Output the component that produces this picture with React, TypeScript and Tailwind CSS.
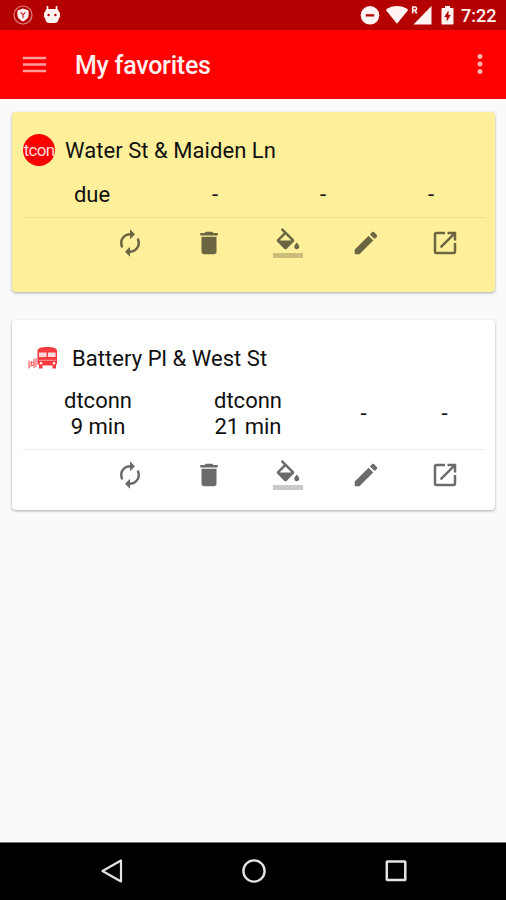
import { ReactNode } from "react";

type Cell = { route?: string; time: string };

const Icon = ({ d, size = "size-[30px]", children }: { d: string; size?: string; children?: ReactNode }) => (
  <svg viewBox="0 0 24 24" className={`${size} block shrink-0`} fill="currentColor">
    <path d={d} />
    {children}
  </svg>
);

const RENEW = "M12 6v3l4-4-4-4v3c-4.42 0-8 3.58-8 8 0 1.57.46 3.03 1.24 4.26L6.7 14.8c-.45-.83-.7-1.79-.7-2.8 0-3.31 2.69-6 6-6zm6.76 1.74L17.3 9.2c.44.84.7 1.79.7 2.8 0 3.31-2.69 6-6 6v-3l-4 4 4 4v-3c4.42 0 8-3.58 8-8 0-1.57-.46-3.03-1.24-4.26z";
const DELETE = "M6 19c0 1.1.9 2 2 2h8c1.1 0 2-.9 2-2V7H6v12zM19 4h-3.5l-1-1h-5l-1 1H5v2h14V4z";
const FILL = "M16.56 8.94L7.62 0 6.21 1.41l2.38 2.38-5.15 5.15c-.59.59-.59 1.54 0 2.12l5.5 5.5c.29.29.68.44 1.06.44s.77-.15 1.06-.44l5.5-5.5c.59-.58.59-1.53 0-2.12zM5.21 10L10 5.21 14.79 10H5.21zM19 11.5s-2 2.17-2 3.5c0 1.1.9 2 2 2s2-.9 2-2c0-1.33-2-3.5-2-3.5z";
const EDIT = "M3 17.25V21h3.75L17.81 9.94l-3.75-3.75L3 17.25zM20.71 7.04c.39-.39.39-1.02 0-1.41l-2.34-2.34c-.39-.39-1.02-.39-1.41 0l-1.83 1.83 3.75 3.75 1.83-1.83z";
const OPEN = "M19 19H5V5h7V3H5c-1.11 0-2 .9-2 2v14c0 1.1.89 2 2 2h14c1.1 0 2-.9 2-2v-7h-2v7zM14 3v2h3.59l-9.83 9.83 1.41 1.41L19 6.41V10h2V3h-7z";
const MENU = "M3 18h18v-2H3v2zm0-5h18v-2H3v2zm0-7v2h18V6H3z";
const MORE = "M12 8c1.1 0 2-.9 2-2s-.9-2-2-2-2 .9-2 2 .9 2 2 2zm0 2c-1.1 0-2 .9-2 2s.9 2 2 2 2-.9 2-2-.9-2-2-2zm0 6c-1.1 0-2 .9-2 2s.9 2 2 2 2-.9 2-2-.9-2-2-2z";

const StatusBar = () => (
  <div className="h-[30px] bg-[#b50000] flex items-center text-[#fff3f3] pl-[13px] pr-[9px]">
    <svg viewBox="0 0 20 20" className="size-5">
      <circle cx="10" cy="10" r="9" fill="none" stroke="#e08484" strokeWidth="1.2" />
      <path d="M10 3.6 15.6 5.4V10c0 3-2.6 5-5.6 6.6C7 15 4.4 13 4.4 10V5.4z" fill="currentColor" />
      <path d="M7.7 7.2 10 10.2l2.3-3M10 10.2v3" fill="none" stroke="#c63c3c" strokeWidth="1.3" />
    </svg>
    <svg viewBox="0 0 18 20" className="w-[18px] h-5 ml-[10px]" fill="currentColor">
      <path d="M4.5 1v4M13.5 1v4" stroke="currentColor" strokeWidth="1.6" />
      <path d="M4.500 4h9c1.500 0 2.200 1 2.200 2.500L17 8v4l-1.300 1.500c0 3-2 4.500-4.200 4.500h-5c-2.200 0-4.200-1.500-4.200-4.500L1 12V8l1.300-1.500C2.300 5 3 4 4.500 4z" />
      <circle cx="5.600" cy="10" r="1.200" fill="#b50000" />
      <circle cx="12.400" cy="10" r="1.200" fill="#b50000" />
    </svg>
    <svg viewBox="0 0 20 20" className="size-5 ml-auto">
      <circle cx="10" cy="10.300" r="9.300" fill="currentColor" />
      <rect x="5.800" y="9.200" width="8.400" height="2.300" fill="#b50000" />
    </svg>
    <svg viewBox="0 0 24 20" className="w-6 h-5 ml-[5px]" fill="currentColor">
      <path d="M12 18.800.800 5C6-.200 18-.200 23.200 5z" />
    </svg>
    <svg viewBox="0 0 21 20" className="w-[21px] h-5 ml-[2px]" fill="currentColor">
      <path d="M20.500 1v18.500H2.500z" />
      <path d="M1.700 8.500V2h2.200a1.500 1.500 0 0 1 0 3.300H1.700m2.200 0 1.800 3.200" fill="none" stroke="currentColor" strokeWidth="1.600" />
    </svg>
    <svg viewBox="0 0 13 20" className="w-[13px] h-5 ml-[9px]">
      <path d="M4 1h5v2h2.500c.6 0 1 .4 1 1v14.500c0 .6-.4 1-1 1h-10c-.6 0-1-.4-1-1V4c0-.6.4-1 1-1H4z" fill="currentColor" />
      <path d="M7.500 5.500 3.200 12h2.500v4.500L9.800 10H7.500z" fill="#b50000" />
    </svg>
    <span className="w-[36px] mt-[2px] ml-[7px] text-[18px] font-medium leading-none whitespace-nowrap">7:22</span>
  </div>
);

const RouteBadge = () => (
  <div className="size-8 rounded-full bg-[#fb0000] flex items-center justify-center text-[17px] leading-none text-[#ffdada]">
    <span className="mt-[2px] tracking-[-0.7px]">tcon</span>
  </div>
);

const BusIcon = () => (
  <svg viewBox="0 0 30 24" className="w-[30px] h-6" fill="#f73a40">
    <path d="M9.500 5C9.500 2 13 1 19.300 1S29 2 29 5v13.500h-1v4h-3.500v-3h-10v3H11v-4H9.500z" />
    <path d="M11 6.500h7.600V11H11zM20 6.500h7.600V11H20z" fill="#ffd9da" />
    <path d="M11 14.300h17" stroke="#ffb0b3" strokeWidth=".8" />
    <circle cx="13" cy="17.300" r="1.200" fill="#fff" />
    <circle cx="26" cy="17.300" r="1.200" fill="#fff" />
    <path d="M1 14.500v8M3.500 15v6M6 13v9M8 12v9M1 17l5-1M1 20.500l6-2" fill="none" stroke="#f9696d" strokeWidth="1.200" />
  </svg>
);

const Actions = () => (
  <div className="flex justify-end border-t border-black/7 pt-[10px] pr-[0.5px] text-black/58">
    {[RENEW, DELETE, FILL, EDIT, OPEN].map((d) => (
      <button key={d} className="w-[78.8px] flex justify-center">
        <Icon d={d}>{d === FILL && <path d="M0 20h24v4H0z" fillOpacity=".36" />}</Icon>
      </button>
    ))}
  </div>
);

const StopCard = ({ name, icon, cells, className, head, row, columns }: {
  name: string;
  icon: ReactNode;
  cells: Cell[];
  className: string;
  head: string;
  row: string;
  columns: string;
}) => (
  <section className={`ml-3 mr-[11px] pl-[11px] pr-[10px] rounded-[4px] shadow-[0_1px_3px_rgba(0,0,0,0.32)] ${className}`}>
    <div className={`flex items-center ${head}`}>
      {icon}
      <h2 className="mt-[2px] tracking-[0.05px]">{name}</h2>
    </div>
    <div className={`grid items-center text-center leading-[26px] ${columns} ${row}`}>
      {cells.map((cell, i) => (
        <div key={i}>
          {cell.route && <div>{cell.route}</div>}
          <div>{cell.time}</div>
        </div>
      ))}
    </div>
    <Actions />
  </section>
);

export default function App() {
  return (
    <div className="w-[506px] h-[900px] flex flex-col overflow-hidden bg-[#fafafa] font-[Roboto,sans-serif] text-[22px] text-[#101010]">
      <StatusBar />
      <header className="h-[69px] shrink-0 bg-[#fe0000] flex items-center pl-[19px] pr-[11px] pb-px text-[#ff9c9c]">
        <Icon d={MENU} size="size-[31px]" />
        <h1 className="ml-[25px] mt-[4px] text-[25px] font-medium text-[#fff0f0] tracking-[-0.25px]">My favorites</h1>
        <div className="ml-auto text-[#ffb4b4]">
          <Icon d={MORE} />
        </div>
      </header>
      <main className="flex-1 pt-[13px]">
        <StopCard
          name="Water St & Maiden Ln"
          icon={<RouteBadge />}
          cells={[{ time: "due" }, { time: "-" }, { time: "-" }, { time: "-" }]}
          className="h-[180px] bg-[#fef09b]"
          head="pt-[21px] h-[54px] gap-[10px]"
          row="h-[51px] pt-[6px]"
          columns="grid-cols-[138px_108px_108px_108px]"
        />
        <StopCard
          name="Battery Pl & West St"
          icon={<BusIcon />}
          cells={[{ route: "dtconn", time: "9 min" }, { route: "dtconn", time: "21 min" }, { time: "-" }, { time: "-" }]}
          className="mt-[28px] h-[190px] bg-white"
          head="pt-[21px] pl-[5px] h-[54px] gap-[14px]"
          row="h-[75px] pt-[5px]"
          columns="grid-cols-[150px_150px_81px_81px]"
        />
      </main>
      <nav className="h-[58px] shrink-0 bg-black border-t border-[#777] flex items-center justify-center gap-[118px] pb-[2px] pl-[2px] text-[#e4e4e4]">
        <svg viewBox="0 0 24 24" className="size-6" fill="none" stroke="currentColor" strokeWidth="2.200">
          <path d="M21 1.500v21L2.500 12z" strokeLinejoin="round" />
        </svg>
        <svg viewBox="0 0 24 24" className="size-6" fill="none" stroke="currentColor" strokeWidth="2.400">
          <circle cx="12" cy="12" r="10.600" />
        </svg>
        <svg viewBox="0 0 24 24" className="size-6" fill="none" stroke="currentColor" strokeWidth="2.500">
          <rect x="2.800" y="2.500" width="18.500" height="18.500" rx=".5" />
        </svg>
      </nav>
    </div>
  );
}
